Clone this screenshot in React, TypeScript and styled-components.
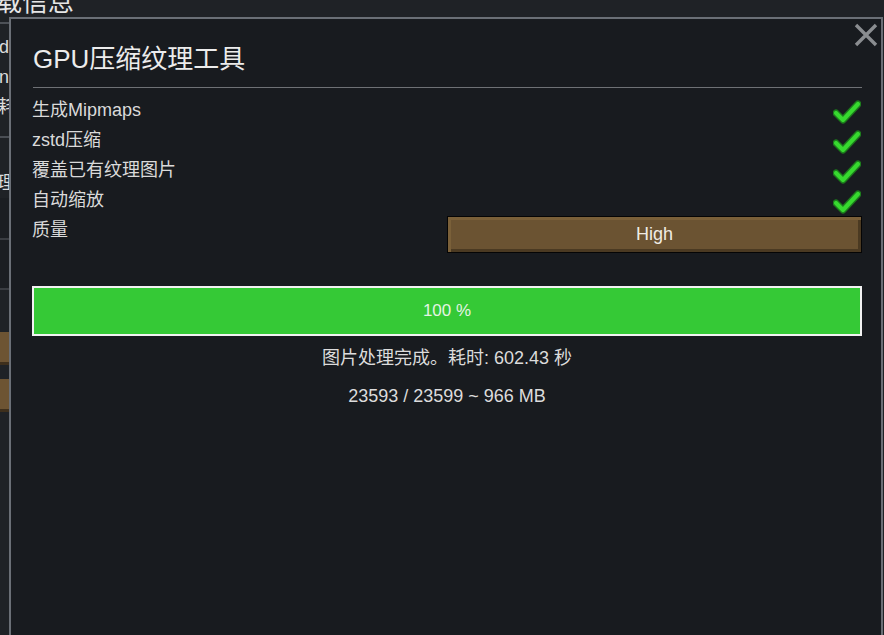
import React from 'react';
import styled, { createGlobalStyle } from 'styled-components';

const GlobalStyle = createGlobalStyle`
  html, body {
    margin: 0;
    padding: 0;
    background: #1f2226;
    overflow: hidden;
  }
  body {
    font-family: "Liberation Sans", "Noto Sans CJK SC", sans-serif;
  }
`;

const Screen = styled.div`
  position: relative;
  width: 884px;
  height: 635px;
  overflow: hidden;
  background: #1f2226;
`;

// window behind the dialog, mostly hidden
const BackWindow = styled.div`
  display: flex;
  flex-direction: column;
  width: 40px;
  color: #dcdcdc;
`;

const BackTitle = styled.div`
  margin: -14px 0 0 -4px;
  font-size: 26px;
  line-height: 32px;
  white-space: nowrap;
  color: #e6e6e6;
  border-bottom: 2px solid #4d5157;
  padding-bottom: 4px;
  width: 120px;
`;

const BackRow = styled.div<{ $shift?: number }>`
  height: 30px;
  line-height: 30px;
  font-size: 18px;
  margin-left: ${p => p.$shift ?? 0}px;
  white-space: nowrap;
`;

const BackSep = styled.div`
  height: 2px;
  background: #4a4e54;
  margin: 14px 0 0;
`;

const BackBand = styled.div<{ $h: number }>`
  height: ${p => p.$h}px;
  background: #1b1e22;
  border-bottom: 2px solid #3a3d42;
`;

const BackButton = styled.div`
  height: 30px;
  margin-top: 14px;
  background: #6d5433;
  border-bottom: 3px solid #3e2f1c;
`;

const Dialog = styled.div`
  position: absolute;
  left: 9px;
  top: 17px;
  width: 874px;
  height: 640px;
  background: #181b1f;
  border: 2px solid #6a6f76;
  padding: 25px 19px 0 21px;
  box-sizing: border-box;
  display: flex;
  flex-direction: column;
`;

const CloseButton = styled.button`
  position: absolute;
  top: 3px;
  right: 2px;
  width: 26px;
  height: 26px;
  padding: 0;
  border: none;
  background: none;
  cursor: pointer;
`;

const Title = styled.h1`
  margin: 0 0 0 1px;
  font-size: 26px;
  font-weight: normal;
  line-height: 30px;
  color: #ececec;
  padding-bottom: 13px;
  border-bottom: 1px solid #6e7175;
`;

const Options = styled.div`
  margin-top: 7px;
  display: flex;
  flex-direction: column;
`;

const OptionRow = styled.div`
  display: flex;
  align-items: center;
  justify-content: space-between;
  height: 30px;
`;

const QualityRow = styled.div`
  display: flex;
  align-items: flex-start;
  justify-content: space-between;
  margin-top: 1px;
`;

const Label = styled.span<{ $lh?: number }>`
  font-size: 18px;
  line-height: ${p => p.$lh ?? 30}px;
  color: #dadada;
`;

const CheckBox = styled.span`
  display: flex;
  width: 28px;
  height: 24px;
  margin-top: 3px;
  margin-right: 1px;
`;

const SelectButton = styled.div`
  width: 415px;
  height: 37px;
  box-sizing: border-box;
  border: 1px solid #050505;
  background: #6b5332;
  box-shadow: inset 3px 3px 0 #7a6039, inset -3px -3px 0 #4b3a22;
  display: flex;
  align-items: center;
  justify-content: center;
  font-size: 18px;
  color: #f0ece4;
`;

const ProgressBar = styled.div`
  margin-top: 33px;
  height: 50px;
  box-sizing: border-box;
  border: 2px solid #f2f2f2;
  background: #1a1d21;
  display: flex;
`;

const ProgressFill = styled.div`
  background: #35c936;
  display: flex;
  align-items: center;
  justify-content: center;
`;

const ProgressText = styled.span`
  font-size: 17px;
  color: #e4f4e4;
`;

const Status = styled.div<{ $gap: number }>`
  margin-top: ${p => p.$gap}px;
  text-align: center;
  font-size: 18px;
  line-height: 20px;
  color: #dcdcdc;
`;

const Check = () => (
  <svg width="28" height="24" viewBox="0 0 28 24">
    <polyline points="3,13 10,20 25,4" fill="none" stroke="#1c7a1c" strokeWidth="7" strokeLinecap="round" strokeLinejoin="round" />
    <polyline points="3,13 10,20 25,4" fill="none" stroke="#37d92f" strokeWidth="4.2" strokeLinecap="round" strokeLinejoin="round" />
  </svg>
);

const CloseIcon = () => (
  <svg width="26" height="26" viewBox="0 0 26 26">
    <path d="M3 3 L23 23 M23 3 L3 23" stroke="#8a8d90" strokeWidth="3.4" />
  </svg>
);

const options = ['生成Mipmaps', 'zstd压缩', '覆盖已有纹理图片', '自动缩放'];

const App: React.FC = () => {
  const progress = 100;

  return (
    <Screen>
      <GlobalStyle />
      <BackWindow>
        <BackTitle>载信息</BackTitle>
        <BackRow $shift={-1} style={{ marginTop: 8 }}>d</BackRow>
        <BackRow $shift={-1}>n</BackRow>
        <BackRow $shift={-2}>耗</BackRow>
        <BackSep />
        <BackRow $shift={-3} style={{ marginTop: 30 }}>理</BackRow>
        <BackBand $h={40} />
        <BackBand $h={48} />
        <BackButton style={{ marginTop: 42 }} />
        <BackButton />
      </BackWindow>

      <Dialog>
        <CloseButton aria-label="close">
          <CloseIcon />
        </CloseButton>
        <Title>GPU压缩纹理工具</Title>
        <Options>
          {options.map(o => (
            <OptionRow key={o}>
              <Label>{o}</Label>
              <CheckBox>
                <Check />
              </CheckBox>
            </OptionRow>
          ))}
          <QualityRow>
            <Label $lh={28}>质量</Label>
            <SelectButton>High</SelectButton>
          </QualityRow>
        </Options>
        <ProgressBar>
          <ProgressFill style={{ width: `${progress}%` }}>
            <ProgressText>{progress} %</ProgressText>
          </ProgressFill>
        </ProgressBar>
        <Status $gap={12}>图片处理完成。耗时: 602.43 秒</Status>
        <Status $gap={18}>23593 / 23599 ~ 966 MB</Status>
      </Dialog>
    </Screen>
  );
};

export default App;
